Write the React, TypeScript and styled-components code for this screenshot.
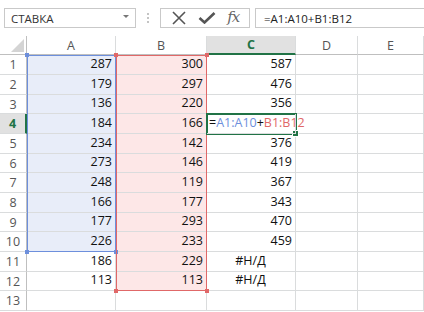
import React from "react";
import styled, { createGlobalStyle } from "styled-components";

const Global = createGlobalStyle`
  html, body { margin: 0; padding: 0; background: #ffffff; }
  body { font-family: "Open Sans", "Liberation Sans", sans-serif; }
`;

const GREEN = "#217346";
const GRID = "#dadcdd";
const HEAD_BORDER = "#bfbfbf";
const BLUE_FILL = "#e8edf9";
const PINK_FILL = "#fde7e7";
const BLUE_LINE = "#6d8fdc";
const RED_LINE = "#e06868";

const Page = styled.div`
  width: 424px;
  height: 312px;
  overflow: hidden;
  background: #fff;
`;

const Toolbar = styled.div`
  height: 36px;
  box-sizing: border-box;
  padding: 8px 0 0 4px;
  display: flex;
  align-items: flex-start;
`;

const NameBox = styled.div`
  width: 132px;
  height: 20px;
  box-sizing: border-box;
  border: 1px solid #c9c9c9;
  display: flex;
  align-items: center;
  justify-content: space-between;
  padding: 0 6px 0 6px;
  font-size: 11.5px;
  color: #333;
`;

const DropArrow = styled.span`
  width: 0;
  height: 0;
  border-left: 3px solid transparent;
  border-right: 3px solid transparent;
  border-top: 3px solid #777;
  margin-top: -3px;
`;

const Dots = styled.div`
  width: 24px;
  height: 20px;
  display: flex;
  flex-direction: column;
  align-items: center;
  justify-content: center;
  gap: 2px;
  span {
    width: 2px;
    height: 2px;
    background: #c4c4c4;
  }
`;

const Buttons = styled.div`
  width: 90px;
  height: 20px;
  box-sizing: border-box;
  border: 1px solid #c9c9c9;
  display: flex;
  align-items: center;
  justify-content: space-around;
  padding: 0 4px;
`;

const Fx = styled.span`
  font-family: "DejaVu Serif", "Liberation Serif", serif;
  font-style: italic;
  font-size: 15px;
  color: #666;
  letter-spacing: -1px;
  margin-top: -2px;
`;

const FormulaBox = styled.div`
  flex: 1;
  margin-left: 5px;
  height: 20px;
  box-sizing: border-box;
  border: 1px solid #c9c9c9;
  border-right: none;
  display: flex;
  align-items: center;
  padding-left: 8px;
  font-size: 11.5px;
  color: #222;
`;

const COLS = "27px 89px 91px 89px 62px 66px";
const ROWS =
  "19px " + [20, 20, 19, 20, 20, 19, 20, 20, 19, 20, 20, 19, 20].map((h) => h + "px").join(" ");

const SheetWrap = styled.div`
  position: relative;
`;

const Sheet = styled.div`
  display: grid;
  grid-template-columns: ${COLS};
  grid-template-rows: ${ROWS};
  font-family: "Open Sans", "Liberation Sans", sans-serif;
`;

const OverlayGrid = styled.div`
  position: absolute;
  inset: 0;
  display: grid;
  grid-template-columns: ${COLS};
  grid-template-rows: ${ROWS};
  pointer-events: none;
  z-index: 3;
`;

const Corner = styled.div`
  box-sizing: border-box;
  border-right: 1px solid ${HEAD_BORDER};
  border-bottom: 1px solid ${HEAD_BORDER};
  display: flex;
  justify-content: flex-end;
  align-items: flex-end;
  padding: 0 2px 2px 0;
  &::after {
    content: "";
    width: 0;
    height: 0;
    border-left: 13px solid transparent;
    border-bottom: 13px solid #d4d4d4;
  }
`;

const ColHeader = styled.div<{ $active?: boolean }>`
  box-sizing: border-box;
  display: flex;
  align-items: center;
  justify-content: center;
  font-size: 12.5px;
  color: ${(p) => (p.$active ? GREEN : "#555")};
  font-weight: ${(p) => (p.$active ? 700 : 400)};
  background: ${(p) => (p.$active ? "#e1e1e1" : "#fff")};
  border-right: 1px solid ${GRID};
  border-bottom: ${(p) => (p.$active ? `2px solid ${GREEN}` : `1px solid ${HEAD_BORDER}`)};
`;

const RowHeader = styled.div<{ $active?: boolean }>`
  box-sizing: border-box;
  display: flex;
  align-items: center;
  justify-content: center;
  font-size: 12.5px;
  color: ${(p) => (p.$active ? GREEN : "#555")};
  font-weight: ${(p) => (p.$active ? 700 : 400)};
  background: ${(p) => (p.$active ? "#e1e1e1" : "#fff")};
  border-bottom: 1px solid ${GRID};
  border-right: ${(p) => (p.$active ? `2px solid ${GREEN}` : `1px solid ${HEAD_BORDER}`)};
`;

const Cell = styled.div<{ $fill?: string; $align?: "left" | "right" | "center"; $top?: boolean }>`
  box-sizing: border-box;
  display: flex;
  align-items: flex-end;
  justify-content: ${(p) =>
    p.$align === "left" ? "flex-start" : p.$align === "center" ? "center" : "flex-end"};
  padding: 0 3px 2px 2px;
  font-size: 12.5px;
  line-height: 16px;
  color: #111;
  white-space: nowrap;
  overflow: visible;
  background: ${(p) => p.$fill || "transparent"};
  border-right: 1px solid ${GRID};
  border-bottom: 1px solid ${GRID};
  position: ${(p) => (p.$top ? "relative" : "static")};
  z-index: ${(p) => (p.$top ? 4 : "auto")};
`;

const RefA = styled.span`
  color: ${BLUE_LINE};
`;
const RefB = styled.span`
  color: ${RED_LINE};
`;

const RangeBox = styled.div<{ $col: number; $rows: string; $color: string }>`
  grid-column: ${(p) => p.$col};
  grid-row: ${(p) => p.$rows};
  box-sizing: border-box;
  border: 1px solid ${(p) => p.$color};
  position: relative;
  span {
    position: absolute;
    width: 4px;
    height: 4px;
    background: ${(p) => p.$color};
  }
`;

const Handle = styled.span<{ $v: "top" | "bottom"; $h: "left" | "right" }>`
  ${(p) => p.$v}: -3px;
  ${(p) => p.$h}: -3px;
`;

const Active = styled.div`
  grid-column: 4;
  grid-row: 5;
  margin: -1px -1px -1px -1px;
  box-sizing: border-box;
  border: 2px solid ${GREEN};
  position: relative;
  z-index: 5;
`;

const FillHandle = styled.span`
  position: absolute;
  right: -4px;
  bottom: -4px;
  width: 5px;
  height: 5px;
  background: ${GREEN};
  border: 1px solid #fff;
`;

const A = [287, 179, 136, 184, 234, 273, 248, 166, 177, 226, 186, 113];
const B = [300, 297, 220, 166, 142, 146, 119, 177, 293, 233, 229, 113];
const C: (number | string | null)[] = [587, 476, 356, null, 376, 419, 367, 343, 470, 459, "#Н/Д", "#Н/Д"];

const XIcon = () => (
  <svg width="16" height="14" viewBox="0 0 16 14">
    <path d="M2 1 L14 13 M14 1 L2 13" stroke="#555" strokeWidth="1.6" fill="none" />
  </svg>
);

const CheckIcon = () => (
  <svg width="18" height="12" viewBox="0 0 18 12">
    <path d="M1.5 6 L6.5 10.5 L16.5 1" stroke="#555" strokeWidth="2.6" fill="none" strokeLinejoin="miter" />
  </svg>
);

export default function App() {
  const rows = [];
  for (let i = 0; i < 13; i++) {
    const n = i + 1;
    const a = i < 12 ? A[i] : "";
    const b = i < 12 ? B[i] : "";
    const c = i < 12 ? C[i] : "";
    rows.push(
      <React.Fragment key={n}>
        <RowHeader $active={n === 4}>{n}</RowHeader>
        <Cell $fill={i < 10 ? BLUE_FILL : undefined}>{a}</Cell>
        <Cell $fill={i < 12 ? PINK_FILL : undefined}>{b}</Cell>
        {n === 4 ? (
          <Cell $align="left" $top>
            =<RefA>A1:A10</RefA>+<RefB>B1:B12</RefB>
          </Cell>
        ) : (
          <Cell $align={typeof c === "string" ? "center" : "right"}>{c}</Cell>
        )}
        <Cell />
        <Cell />
      </React.Fragment>
    );
  }

  return (
    <Page>
      <Global />
      <Toolbar>
        <NameBox>
          СТАВКА
          <DropArrow />
        </NameBox>
        <Dots>
          <span />
          <span />
          <span />
        </Dots>
        <Buttons>
          <XIcon />
          <CheckIcon />
          <Fx>fx</Fx>
        </Buttons>
        <FormulaBox>=A1:A10+B1:B12</FormulaBox>
      </Toolbar>
      <SheetWrap>
        <Sheet>
          <Corner />
          <ColHeader>A</ColHeader>
          <ColHeader>B</ColHeader>
          <ColHeader $active>C</ColHeader>
          <ColHeader>D</ColHeader>
          <ColHeader>E</ColHeader>
          {rows}
        </Sheet>
        <OverlayGrid>
          <RangeBox $col={2} $rows="2 / 12" $color={BLUE_LINE}>
            <Handle $v="top" $h="left" />
            <Handle $v="top" $h="right" />
            <Handle $v="bottom" $h="left" />
            <Handle $v="bottom" $h="right" />
          </RangeBox>
          <RangeBox $col={3} $rows="2 / 14" $color={RED_LINE}>
            <Handle $v="top" $h="left" />
            <Handle $v="top" $h="right" />
            <Handle $v="bottom" $h="left" />
            <Handle $v="bottom" $h="right" />
          </RangeBox>
          <Active>
            <FillHandle />
          </Active>
        </OverlayGrid>
      </SheetWrap>
    </Page>
  );
}
